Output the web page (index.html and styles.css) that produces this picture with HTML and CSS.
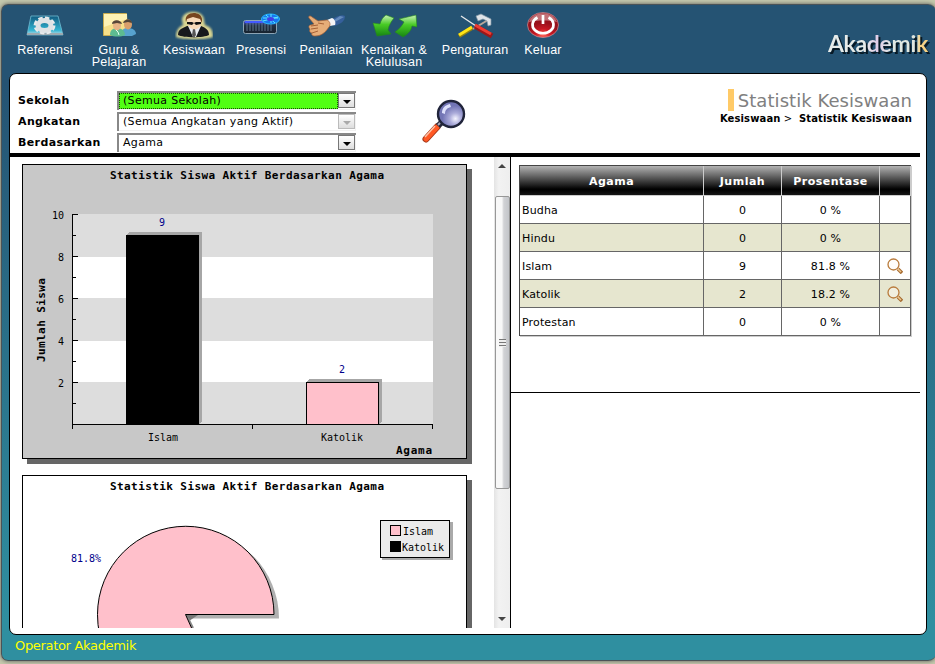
FILE: index.html
```
<!DOCTYPE html>
<html lang="id">
<head>
<meta charset="utf-8">
<title>Akademik</title>
<link rel="stylesheet" href="styles.css">
</head>
<body>
<div class="frame">
  <header class="top">
    <nav class="menu">
      <a class="item w72"><svg width="38" height="26" viewBox="26 12 38 26"><defs><linearGradient id="tray" x1="0" y1="0" x2="0" y2="1"><stop offset="0" stop-color="#105b80"/><stop offset=".75" stop-color="#33b4d2"/><stop offset="1" stop-color="#c5dfe7"/></linearGradient></defs><path d="M31 16h27l5 19H27z" fill="url(#tray)" stroke="#71bdd3" stroke-width=".8"/><path d="M27 33h36v2H27z" fill="#9ba9b0"/><ellipse cx="44.500" cy="25.500" rx="8.500" ry="6.500" fill="none" stroke="#e8eaec" stroke-width="5" stroke-dasharray="3.900 2"/><ellipse cx="44.500" cy="25.500" rx="6.500" ry="5" fill="none" stroke="#dfe2e5" stroke-width="5"/></svg><span>Referensi</span></a>
      <a class="item w76"><svg width="38" height="26" viewBox="100 12 38 26"><path d="M103.500 13.500h23l1 19-4 3h-20z" fill="#f6df89" stroke="#c9ac50"/><path d="M104 14h23v5l-23 8z" fill="#fff2b4"/><path d="M121 36c0-7 3-8 7-8s8 2 8 6l-4 2z" fill="#57a2ce"/><ellipse cx="128" cy="24.500" rx="4" ry="5" fill="#d99f6b"/><path d="M123 23c1-4 8-5 9 0l-4-1z" fill="#514437"/><path d="M110 35c0-5 3-7 7-7s8 2 8 7c-4 2-11 2-15 0z" fill="#5dbb91"/><ellipse cx="117" cy="25.500" rx="4" ry="5" fill="#e6b486"/><path d="M112 24c0-5 9-5 10 0l-5-1z" fill="#574638"/><path d="m116 30 2 2 1 3" stroke="#e6fff1" fill="none"/></svg><span>Guru &amp;<br>Pelajaran</span></a>
      <a class="item w74"><svg width="38" height="30" viewBox="175 10 38 30"><defs><filter id="glow" x="-20%" y="-20%" width="140%" height="140%"><feGaussianBlur stdDeviation="1"/></filter></defs><path d="M182 20c0-11 22-11 22 0l1 5c6 2 8 5 8 12-6 3-31 3-37 0 0-7 3-10 7-12z" fill="#d8d491" filter="url(#glow)"/><path d="M178 35c0-6 5-7 9-9h14c5 2 8 4 8 9-5 3-26 3-31 0z" fill="#17191d"/><path d="m188 26 5 11h3l5-11z" fill="#e9edf0"/><path d="m193 29-1 6 2 3 2-3-1-6z" fill="#555"/><path d="M187 20c0-5 13-5 14 0v4c-1 7-12 7-13 0z" fill="#f8d9b8"/><path d="M186 22c-3-11 15-12 16-3v4l-2-4-7-2-6 2z" fill="#774520"/><path d="M187 22h5l2 1 2-1h5v2l-5 1-2-2-2 2-5-1z" fill="#111"/></svg><span>Kesiswaan</span></a>
      <a class="item w60"><svg width="40" height="26" viewBox="241 12 40 26"><defs><linearGradient id="scan" x1="0" y1="0" x2="0" y2="1"><stop stop-color="#4354dd"/><stop offset=".4" stop-color="#203044"/><stop offset="1" stop-color="#17232e"/></linearGradient></defs><rect x="243.500" y="20.500" width="33" height="13" rx="2" fill="url(#scan)" stroke="#8ca4b5"/><path d="M247 22v9m3-9v9m3-9v9m3-9v9m3-9v9m3-9v9m3-9v9m3-9v9m3-9v9" stroke="#61788b"/><path d="M245 22h26" stroke="#4359ff" stroke-width="2"/><ellipse cx="270.500" cy="19" rx="9" ry="5" fill="#1676f0" stroke="#25baff"/><path d="m263 21 15-4m-12-2 9 8m-12-5h15m-7-4v9" stroke="#60eaff"/><ellipse cx="270.500" cy="19" rx="3.500" ry="2" fill="#443ee2"/></svg><span>Presensi</span></a>
      <a class="item w70"><svg width="42" height="26" viewBox="305 12 42 26"><path d="M330 21c6-5 12-7 15-5 0 5-4 8-11 10z" fill="#355f9b"/><path d="m331 22 9-6 4 1-9 5z" fill="#648bbc"/><path d="m327 20 5-2c3 1 4 5 3 7l-5 1z" fill="#f4f5f7"/><path d="m314 24-5-6c-1-2 1-3 3-1l6 4 9-1c3 1 4 5 2 7-4 6-8 9-14 9-3 0-4-2-3-3-2 0-3-2-2-4-2-2-1-4 1-4z" fill="#e6ad78" stroke="#a76237" stroke-width=".7"/><path d="m311 26 7-1m-7 4 7-1m-6 5 6-2m0-8 6 1" stroke="#a76237" fill="none"/></svg><span>Penilaian</span></a>
      <a class="item w66"><svg width="46" height="26" viewBox="371 12 46 26"><defs><linearGradient id="leaf" x1="0" y1="0" x2="0" y2="1"><stop stop-color="#c9f1b7"/><stop offset=".45" stop-color="#48cb25"/><stop offset="1" stop-color="#168513"/></linearGradient></defs><path d="m394 18-8-3c-3 2-5 5-6 9l-7-1 4 13 14-2-3-4c1-5 3-8 6-12z" fill="url(#leaf)" stroke="#25891b" stroke-width=".6"/><path d="m395 32 8 5c5-3 8-6 9-11l5 1-1-12-17 4 5 3c-2 4-5 7-9 10z" fill="url(#leaf)" stroke="#25891b" stroke-width=".6"/></svg><span>Kenaikan &amp;<br>Kelulusan</span></a>
      <a class="item w96"><svg width="40" height="26" viewBox="455 12 40 26"><path d="m461 16 18 12" stroke="#e7e9ea" stroke-width="1.300"/><path d="m488 20-15 9" stroke="#b9a89b" stroke-width="2"/><path d="m476 16 5-2 10 5v6l-3 1-1-5-4-2-5 2z" fill="#e0e4e8" stroke="#8396a3" stroke-width=".7"/><path d="m459 36 13-8" stroke="#938211" stroke-width="4"/><path d="m459 35 13-8" stroke="#ffe516" stroke-width="3"/><path d="m475 26 17 10" stroke="#9b1719" stroke-width="5"/><path d="m475 25 16 9" stroke="#ef3d32" stroke-width="3"/></svg><span>Pengaturan</span></a>
      <a class="item w40"><svg width="34" height="28" viewBox="526 11 34 28"><defs><radialGradient id="power" cy=".9"><stop stop-color="#ff6558"/><stop offset=".5" stop-color="#c91823"/><stop offset="1" stop-color="#98121c"/></radialGradient></defs><ellipse cx="543" cy="25" rx="15.500" ry="12.500" fill="url(#power)" stroke="#dca8ac" stroke-width=".6"/><path d="M529 22c4-11 23-12 28 0-8-2-19-2-28 0z" fill="#fff" opacity=".4"/><path d="M537.500 17.500a10.500 8.500 0 1 0 11 0M543 15v9" stroke="#fff" stroke-width="2.700" fill="none"/></svg><span>Keluar</span></a>
    </nav>
    <div class="brand">Akademik</div>
  </header>

  <main class="panel">
    <section class="filter">
      <div class="fields">
        <div class="field"><b>Sekolah</b><div class="select"><span class="value chosen">(Semua Sekolah)</span><i class="drop"></i></div></div>
        <div class="field"><b>Angkatan</b><div class="select"><span class="value">(Semua Angkatan yang Aktif)</span><i class="drop off"></i></div></div>
        <div class="field"><b>Berdasarkan</b><div class="select"><span class="value">Agama</span><i class="drop"></i></div></div>
      </div>
      <svg class="search" width="48" height="48" viewBox="420 97 48 48"><defs><radialGradient id="lens" cx=".67" cy=".68"><stop stop-color="#f4f4ff"/><stop offset=".45" stop-color="#aaaad9"/><stop offset="1" stop-color="#7275b5"/></radialGradient></defs><path d="m437 127-11 12" stroke="#a7391b" stroke-width="7" stroke-linecap="round"/><path d="m437 127-11 12" stroke="#ff5824" stroke-width="5" stroke-linecap="round"/><path d="m435 126-10 11" stroke="#ffc2a5" stroke-width="1.500"/><path d="m442 122-4 4" stroke="#242638" stroke-width="6"/><path d="m441 122-3 3" stroke="#aab" stroke-width="2"/><circle cx="451" cy="114" r="13" fill="url(#lens)" stroke="#20243a" stroke-width="2.400"/><path d="M442 113c0-5 3-8 8-9l1 3c-4 1-6 3-6 7z" fill="#dde0fb"/></svg>
      <div class="heading"><h1>Statistik Kesiswaan</h1><p><b>Kesiswaan</b> &gt; &nbsp;<b>Statistik Kesiswaan</b></p></div>
    </section>
    <section class="content">
      <div class="charts">
        <div class="plots">
        <svg width="450" height="300" viewBox="22 164 450 300" shape-rendering="crispEdges">
          <path d="M27 169h445v295H27z" fill="#666"/>
          <path d="M22.500 164.500h444v294h-444z" fill="#c8c8c8" stroke="#000"/>
          <path d="M73 214h360v210H73z" fill="#fff"/>
          <path d="M73 214h360v43H73zm0 84h360v43H73zm0 84h360v42H73z" fill="#ddd"/>
          <path d="m126 235 3-3h73v189l-3 3zM306 382l3-3h73v42l-3 3z" fill="#a6a6a6"/>
          <path d="M126 235h73v189h-73z"/>
          <path d="M306.500 382.500h72v42h-72z" fill="pink" stroke="#000"/>
          <path d="M72.500 214v215M72 424.500h361M252.500 424v5M432.500 424v5M72 214.500h6M72 256.500h6M72 298.500h6M72 340.500h6M72 382.500h6M72 235.500h4M72 277.500h4M72 319.500h4M72 361.500h4M72 403.500h4" stroke="#000"/>
          <text class="strong" x="110" y="179" textLength="274">Statistik Siswa Aktif Berdasarkan Agama</text>
          <g class="mono"><text x="52" y="219">10</text><text x="58" y="261">8</text><text x="58" y="303">6</text><text x="58" y="345">4</text><text x="58" y="387">2</text><text x="148" y="441">Islam</text><text x="321" y="441">Katolik</text><text class="navy" x="159" y="226">9</text><text class="navy" x="339" y="373">2</text></g>
          <text class="strong" x="396" y="454" textLength="36">Agama</text>
          <text class="strong" transform="translate(45 362) rotate(-90)" textLength="84">Jumlah Siswa</text>
        </svg>
        <svg width="450" height="153" viewBox="22 475 450 153">
          <g shape-rendering="crispEdges"><path d="M467 480h5v148h-5z" fill="#666"/><path d="M22.500 640V475.500h444V640" fill="#fff" stroke="#000"/></g>
          <path d="M190 618.500h89a88.500 88.500 0 0 0-177 0z" fill="#b0b0b0"/><path d="M190 619v14h10z" fill="#fff"/><path d="m186 615 12 0-9 6z" fill="#777"/><path d="m188 618 5 10" stroke="#888" stroke-width="2"/>
          <path d="M185.500 614.500h88.500a88.250 88.250 0 0 0-176.500 0q0 10 2 20h95z" fill="pink" stroke="#000"/>
          <g shape-rendering="crispEdges"><path d="M382 522h71v38h-71z" fill="#aaa"/><path d="M380.500 520.500h69v37h-69z" fill="#ebebeb" stroke="#000"/><path d="M390.500 525.500h10v10h-10z" fill="pink" stroke="#000"/><path d="M390 541h11v11h-11z"/></g>
          <text class="strong" x="110" y="490" textLength="274">Statistik Siswa Aktif Berdasarkan Agama</text>
          <g class="mono"><text class="navy" x="71" y="562">81.8%</text><text x="403" y="535">Islam</text><text x="402" y="551">Katolik</text></g>
        </svg>
        </div>
        <div class="scroll"><i class="arrow up"></i><div class="thumb"><i class="grip"></i></div><i class="arrow down"></i></div>
      </div>
      <div class="data">
        <div class="summary">
          <table>
            <colgroup><col class="c1"><col class="c2"><col class="c3"><col class="c4"></colgroup>
            <tr><th>Agama</th><th>Jumlah</th><th>Prosentase</th><th></th></tr>
            <tr><td>Budha</td><td>0</td><td>0 %</td><td></td></tr>
            <tr class="alt"><td>Hindu</td><td>0</td><td>0 %</td><td></td></tr>
            <tr><td>Islam</td><td>9</td><td>81.8 %</td><td><svg width="16" height="16" viewBox="0 0 16 16"><circle cx="6.500" cy="6.500" r="5.500" fill="#fffdfa" stroke="#b97b3c" stroke-width="1.300"/><path d="m11 11 4 4" stroke="#a56a30" stroke-width="3.500"/><path d="m11 11 3 3" stroke="#f0c78b" stroke-width="1.500"/></svg></td></tr>
            <tr class="alt"><td>Katolik</td><td>2</td><td>18.2 %</td><td><svg width="16" height="16" viewBox="0 0 16 16"><circle cx="6.500" cy="6.500" r="5.500" fill="#f1efdf" stroke="#b97b3c" stroke-width="1.300"/><path d="m11 11 4 4" stroke="#a56a30" stroke-width="3.500"/><path d="m11 11 3 3" stroke="#f0c78b" stroke-width="1.500"/></svg></td></tr>
            <tr><td>Protestan</td><td>0</td><td>0 %</td><td></td></tr>
          </table>
        </div>
      </div>
    </section>
  </main>
  <footer>Operator Akademik</footer>
</div>
</body>
</html>
```
FILE: styles.css
```
* { box-sizing: border-box; }
body { margin: 0; height: 664px; overflow: hidden; background: #c5c9ad; font: 11px "DejaVu Sans", sans-serif; color: #000; padding: 4px 0 0 1px; }
svg { display: block; flex: none; }
.frame { width: 935px; height: 657px; padding: 0 0 0 8px; border: solid #4b5357; border-width: 1px 0 1px 1px; border-radius: 7px 8px 8px 7px; background: linear-gradient(#255373 0, #255373 12%, #2f8fa0 94%); box-shadow: 0 0 4px #555; margin-right: -1px; display: flex; flex-direction: column; }
.top { height: 68px; display: flex; justify-content: space-between; margin-left: -1px; }
.menu { display: flex; padding-top: 5px; }
.item { display: flex; flex-direction: column; align-items: center; color: #fff; font: 12.5px/12px "Liberation Sans", sans-serif; letter-spacing: .2px; text-align: center; white-space: nowrap; }
.item svg { height: 30px; margin-bottom: 4px; }
.w72 { width: 72px; } .w76 { width: 76px; } .w74 { width: 74px; } .w60 { width: 60px; } .w70 { width: 70px; } .w66 { width: 66px; } .w96 { width: 96px; } .w40 { width: 40px; }
.brand { margin: 24px 5px 0 0; width: 103px; height: 28px; font: bold 23px/28px Lato, sans-serif; letter-spacing: -.35px; color: transparent; background: linear-gradient(90deg, #e6ebe9 35%, #e0cde8 48%, #dfe8e4 62%, #dfe6df 84%, #f5d184 90%); -webkit-background-clip: text; background-clip: text; filter: drop-shadow(2px 2px 0 #071925); white-space: nowrap; }
.panel { width: 918px; height: 562px; margin-left: -1px; border: 1px solid #000; border-radius: 7px; background: #fff; overflow: hidden; }
.filter { width: 910px; height: 83px; border-bottom: 4px solid #000; display: flex; padding: 16px 8px 0; }
.fields { width: 338px; }
.field { height: 21px; display: flex; align-items: center; }
.field b { width: 99px; letter-spacing: .38px; }
.select { width: 239px; height: 19px; display: flex; border: solid #888; border-width: 2px 0 0 2px; box-shadow: inset -1px -1px #f2f2f2; letter-spacing: .31px; }
.value { flex: 1; height: 16px; line-height: 15px; padding-left: 4px; white-space: nowrap; }
.chosen { background: #51ff13; border: 1px dotted #174b06; line-height: 14px; padding-left: 3px; }
.drop { width: 17px; height: 15px; margin-right: 1px; background: linear-gradient(#fff, #ddd); border: 1px solid #777; display: flex; align-items: center; justify-content: center; }
.drop::after { content: ""; border: solid transparent; border-width: 4px 4px 0; border-top-color: #000; margin-top: 3px; }
.off { border-color: #bbb; } .off::after { border-top-color: #aaa; }
.search { margin: 7px 0 0 64px; }
.heading { flex: 1; display: flex; flex-direction: column; align-items: flex-end; white-space: nowrap; }
h1 { margin: -1px 0 0; height: 22px; border-left: 6px solid #ffca67; padding-left: 4px; font: 18px/23px "DejaVu Sans", sans-serif; color: #808080; letter-spacing: .06px; }
.heading p { margin: 1px 0 0; font-size: 10px; line-height: 13px; letter-spacing: .12px; }
.content { display: flex; width: 910px; height: 471px; }
.charts { width: 501px; border-right: 1px solid #000; display: flex; justify-content: space-between; }
.plots { margin: 7px 0 0 12px; display: flex; flex-direction: column; gap: 11px; }
.mono { font: 10px "DejaVu Sans Mono", monospace; }
.strong { font: bold 11px "DejaVu Sans Mono", monospace; }
.navy { fill: #00008b; }
.scroll { width: 16px; background: linear-gradient(90deg, #e4e4e4, #f2f2f2 30%, #eee); display: flex; flex-direction: column; align-items: center; }
.thumb { width: 15px; height: 293px; margin-top: 28px; border: 1px solid #979797; border-radius: 2px; background: linear-gradient(90deg, #f8f8f8 45%, #d1d2d5 60%, #c3c5c9); display: flex; align-items: center; justify-content: center; }
.grip { width: 7px; height: 8px; background: repeating-linear-gradient(#777 0 1px, #eee 1px 3px); }
.arrow { border: solid transparent; }
.up { border-width: 0 4px 4px; border-bottom-color: #444; margin-top: 7px; }
.down { border-width: 4px 4px 0; border-top-color: #444; margin-top: 128px; }
.data { flex: 1; padding: 8px 0 0 8px; }
.summary { height: 228px; margin-left: -8px; padding-left: 8px; border-bottom: 1px solid #000; }
table { width: 392px; height: 171px; border-spacing: 0; table-layout: fixed; border: solid #444; border-width: 1px 0 0 1px; box-shadow: 1px 1px #ccc; letter-spacing: .15px; }
.c1 { width: 184px; } .c2 { width: 78px; } .c3 { width: 98px; } .c4 { width: 31px; }
th, td { padding: 1px 0 0; border: solid #666; border-width: 0 1px 1px 0; text-align: center; height: 28px; }
th { height: 30px; border-color: #ccc; color: #fff; background: linear-gradient(#b3b3b3, #000 80%, #151515); letter-spacing: .5px; }
td:first-child { text-align: left; padding-left: 2px; }
td svg { margin: -1px auto 0 7px; }
.alt { background: #e6e6cf; }
footer { color: #ff0; font-size: 13px; letter-spacing: -.32px; line-height: 22px; padding-left: 5px; }
```
